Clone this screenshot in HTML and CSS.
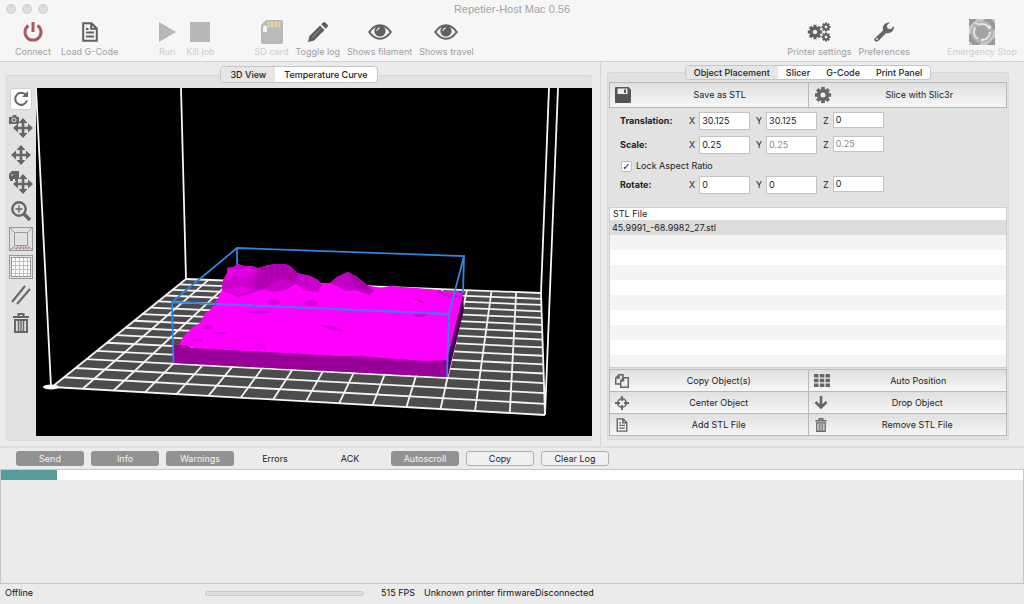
FILE: index.html
```html
<!DOCTYPE html>
<html lang="en">
<head>
  <meta charset="UTF-8">
  <meta name="viewport" content="width=device-width, initial-scale=1.0">
  <title>Repetier-Host Mac 0.56</title>
  <link rel="stylesheet" href="styles.css">
</head>
<body>
  <!-- shared icons -->
  <svg class="defs" width="0" height="0" aria-hidden="true">
    <symbol id="file" viewBox="0 0 16 20">
      <path d="M1.2 1.2h8.3l5.3 5.3v12.3H1.2zM9.2 1.5v5.3h5.3M4 10.5h8M4 14.5h8M4 7h2.500" fill="none" stroke="currentColor" stroke-width="2"/>
    </symbol>
    <symbol id="eye" viewBox="0 0 24 16">
      <path d="M1.200 8C5.500 2 8.500 1.200 12 1.200S18.500 2 22.800 8C18.500 14 15.500 14.800 12 14.800S5.500 14 1.200 8z" fill="#f6f6f6" stroke="currentColor" stroke-width="2"/>
      <circle cx="12" cy="7" r="5.600" fill="currentColor"/>
      <path d="M9 7a3.200 3.200 0 0 1 3-3" fill="none" stroke="#ddd" stroke-width="1.200"/>
    </symbol>
    <symbol id="gear" viewBox="-10 -10 20 20">
      <g fill="currentColor">
        <rect x="-2" y="-9" width="4" height="18"/>
        <rect x="-2" y="-9" width="4" height="18" transform="rotate(45)"/>
        <rect x="-2" y="-9" width="4" height="18" transform="rotate(90)"/>
        <rect x="-2" y="-9" width="4" height="18" transform="rotate(135)"/>
      </g>
      <circle r="4.800" fill="#eee" stroke="currentColor" stroke-width="4"/>
    </symbol>
    <symbol id="trash" viewBox="0 0 16 20">
      <path d="M5.500 3V1h5v2M0 4h16" fill="none" stroke="currentColor" stroke-width="2"/>
      <path d="M2 7h12v12H2z" fill="none" stroke="currentColor" stroke-width="2"/>
      <path d="M5.500 8v10M8 8v10M10.500 8v10" stroke="currentColor" stroke-width="1.500"/>
    </symbol>
    <symbol id="move" viewBox="0 0 20 20">
      <path d="M10 3v14M3 10h14" stroke="currentColor" stroke-width="2.600"/>
      <path d="M10 0l4.500 5h-9zM10 20l4.500-5h-9zM0 10l5-4.500v9zM20 10l-5-4.500v9z" fill="currentColor"/>
    </symbol>
  </svg>

  <header class="titlebar">
    <div class="title">
      <span class="lights"><i></i><i></i><i></i></span>
      <h1>Repetier-Host Mac 0.56</h1>
    </div>
    <div class="toolbar">
      <div class="tools">
        <button class="tool">
          <svg width="20" height="20" viewBox="0 0 20 20"><path d="M5.500 3.500a8 8 0 1 0 9 0M10 0v10" fill="none" stroke="#ab5a61" stroke-width="3"/></svg>
          Connect
        </button>
        <button class="tool"><svg width="16" height="20"><use href="#file"/></svg>Load G-Code</button>
      </div>
      <div class="tools">
        <button class="tool" disabled>
          <svg width="18" height="20" viewBox="0 0 18 20"><path d="M1 0l17 10L1 20z" fill="#b8b8b8"/></svg>
          Run
        </button>
        <button class="tool" disabled>
          <svg width="20" height="20"><rect width="20" height="20" fill="#b8b8b8"/></svg>
          Kill job
        </button>
      </div>
      <div class="tools tight">
        <button class="tool" disabled>
          <svg width="22" height="24" viewBox="0 0 22 24">
            <path d="M5 0h15a2 2 0 0 1 2 2v20a2 2 0 0 1-2 2H2a2 2 0 0 1-2-2V5z" fill="#b9b9b9"/>
            <path d="M7.500 1.500v6M11 1.500v6M14.500 1.500v6M18 1.500v6" stroke="#e3d3a4" stroke-width="2.500"/>
            <path d="M2 7l2-2 2 2v5H2z" fill="#f6f6f6"/>
          </svg>
          SD card
        </button>
        <button class="tool">
          <svg width="20" height="20" viewBox="0 0 20 20"><path d="M0 20l1.500-6L12 3.500 16.500 8 6 18.500zM13.200 2.300l2-1.900q1-.8 2 0l2.400 2.400q.8 1 0 2l-1.900 2z" fill="#5c5c5c"/><path d="M4 15.500l9-9" stroke="#999"/></svg>
          Toggle log
        </button>
        <button class="tool"><svg width="24" height="16"><use href="#eye"/></svg>Shows filament</button>
        <button class="tool"><svg width="24" height="16"><use href="#eye"/></svg>Shows travel</button>
      </div>
      <div class="tools tight right">
        <button class="tool">
          <svg width="24" height="20" viewBox="0 0 24 20">
            <use href="#gear" x="0" y="2" width="16" height="16"/>
            <use href="#gear" x="14" y="0" width="10" height="10"/>
            <use href="#gear" x="14" y="10" width="10" height="10"/>
          </svg>
          Printer settings
        </button>
        <button class="tool">
          <svg width="20" height="20" viewBox="0 0 20 20"><path d="M.8 16.200L9 8.500C8 4 11 0 16 .5L12.800 3.500l.7 3 3.200.7L20 4c.3 5-3.500 8-7.800 7L4.200 19c-2.500 2-5-.8-3.400-2.800z" fill="#666"/><circle cx="3" cy="17" r="1" fill="#eee"/></svg>
          Preferences
        </button>
      </div>
      <button class="tool" disabled>
        <svg width="26" height="26" viewBox="0 0 26 26">
          <rect width="26" height="26" fill="#999"/>
          <path d="M0 8l8-8h8L0 16zM26 10v8l-8 8h-8zM0 22l4 4H0zM22 0h4v4z" fill="#c9c9c9"/>
          <circle cx="13" cy="13" r="11" fill="#b5b5b5"/>
          <circle cx="13" cy="13" r="8" fill="#aaa" stroke="#f0f0f0" stroke-width="1.500" stroke-dasharray="13 3.750"/>
          <path d="M19 7l3 0-1 4zM7 5.500l-1-2 4 1zM12 21l2-2v4z" fill="#f0f0f0"/>
          <circle cx="13" cy="13" r="5.500" fill="#a2a2a2"/>
        </svg>
        Emergency Stop
      </button>
    </div>
  </header>

  <main class="panes">
    <section class="pane view">
      <nav class="tabs">
        <button class="tab active">3D View</button>
        <button class="tab">Temperature Curve</button>
      </nav>
      <div class="group stage">
        <div class="modes">
          <button class="mode on" aria-label="Rotate">
            <svg width="16" height="16" viewBox="0 0 16 16"><path d="M13 4.200A6 6 0 1 0 14 9.500" fill="none" stroke="currentColor" stroke-width="2"/><path d="M15 0v6H9z" fill="currentColor"/></svg>
          </button>
          <button class="mode" aria-label="Move camera">
            <svg width="24" height="24" viewBox="0 0 24 24"><use href="#move" x="4" y="3" width="20" height="20"/><path d="M0 2h3l1-2h3l1 2h2v7H0z" fill="currentColor"/><circle cx="5" cy="5" r="2" fill="none" stroke="#e0e0e0"/></svg>
          </button>
          <button class="mode" aria-label="Move view"><svg width="20" height="20"><use href="#move"/></svg></button>
          <button class="mode" aria-label="Move object">
            <svg width="24" height="24" viewBox="0 0 24 24"><use href="#move" x="4" y="3" width="20" height="20"/><path d="M3 0h7v8H0V3zM1 8h3v2H1zM6 8h3v2H6z" fill="currentColor"/><path d="M2 4h2" stroke="#e0e0e0"/></svg>
          </button>
          <button class="mode" aria-label="Zoom">
            <svg width="20" height="20" viewBox="0 0 20 20"><circle cx="8" cy="8" r="6.700" fill="none" stroke="currentColor" stroke-width="2.400"/><path d="M13 13l6 6" stroke="currentColor" stroke-width="3.500"/><path d="M8 4.500v7M4.500 8h7" stroke="currentColor" stroke-width="1.500"/></svg>
          </button>
          <button class="mode" aria-label="Perspective view">
            <svg width="24" height="24" viewBox="0 0 24 24" fill="none" stroke="#999"><rect x=".5" y=".5" width="23" height="23"/><path d="M5.500 5.500h13v13h-13zM.5.500l5 5M23.500.5l-5 5M.5 23.500l5-5M23.500 23.500l-5-5"/><path d="M7 23l2-4M11 23l.5-4M15 23l-1-4M19 23l-3-4M3 21h18" stroke="#b48c8c"/></svg>
          </button>
          <button class="mode" aria-label="Top view">
            <svg width="24" height="24" viewBox="0 0 24 24" fill="none" stroke="#999"><rect x=".5" y=".5" width="23" height="23"/><rect x="2.500" y="2.500" width="19" height="19" fill="#fff"/><path d="M6.500 3v18M10.500 3v18M14.500 3v18M18.500 3v18M3 6.500h18M3 10.500h18M3 14.500h18M3 18.500h18" stroke="#dbb0ba"/></svg>
          </button>
          <button class="mode" aria-label="Parallel projection">
            <svg width="20" height="20" viewBox="0 0 20 20"><path d="M1 17L14 1M6 19L19 4" stroke="currentColor" stroke-width="2"/></svg>
          </button>
          <button class="mode" aria-label="Delete"><svg width="16" height="20"><use href="#trash"/></svg></button>
        </div>
        <svg class="viewport" viewBox="36 88 556 348" preserveAspectRatio="xMidYMid meet">
          <!-- printer bed, lines are added by bed.js -->
          <polygon points="52,387 545,415 541,293 186,279" fill="#4c4c4c"/>
          <g id="bed" stroke="#f5f5f5" stroke-width="1.800"></g>
          <g stroke="#f5f5f5" stroke-width="1.800" fill="none">
            <path d="M51 387L36 88M186 279L181 88M541 293L549 88M545 415L558 88"/>
          </g>
          <ellipse cx="51" cy="387" rx="8" ry="2.500" fill="#fff"/>
          <path d="M237 248V270M464 256L463 293" stroke="#2f86e0" stroke-width="1.800"/>
          <!-- model -->
          <polygon points="463,293 464,310 448,376 446,360" fill="#4b004f"/>
          <path d="M173 345h6l4-8 10-10 7-4 5-10 5-3 8-12 4-8 1-10 4-7v-5l6-1 5-3 6 2 7 0 7 2 7-2 10-2h10l5 2 7 7 13 3 8 4 4 4 8-1 7-6 11-5 9 5 10 8 13 3 10-2 13 1 14 1 20 2 6 1 14 0 6 3-16 67-20 2-44-5-50 0-110-6z" fill="#f0f"/>
          <path d="M227 268l6-1 5-3 6 2 7 0 7 2 7-2 10-2h10l5 2 7 7 13 3 8 4 4 4-4 8-14-2-8-6-10 6-12 2-12-3-12 5-12 3-16-7 1-10 4-7z" fill="#cc00cc"/>
          <path d="M258 268l7-2 10-2h10l5 2 7 7 1 6-8 5-6-5-12 4-10 7-10-3z" fill="#b300b5"/>
          <path d="M265 268l2 12M271 267v14M277 267l1 12M283 268l2 11M289 270l2 9M296 275l3 7M306 277l2 9" stroke="#8c0090" stroke-width="1" opacity=".6"/>
          <path d="M228 268l12 2 8-3 8 4-10 7-13-2-8 6zM225 290l16-4 12 4-14 5z" fill="#e200e4"/>
          <path d="M330 283l7-6 11-5 9 5 10 8 8 6-6 4-13-5-10 1-9-5z" fill="#c400c6"/>
          <path d="M348 273l9 4 10 8 3 6-14-4z" fill="#a800aa"/>
          <g fill="#c800ca" opacity=".7">
            <ellipse cx="274" cy="302" rx="6" ry="3"/><ellipse cx="311" cy="303" rx="7" ry="3"/>
            <ellipse cx="259" cy="312" rx="11" ry="1.500"/><ellipse cx="207" cy="327" rx="6" ry="2"/>
            <ellipse cx="221" cy="333" rx="6" ry="1.500"/><ellipse cx="197" cy="340" rx="5" ry="1.500"/>
            <ellipse cx="260" cy="345" rx="5" ry="1.500"/><ellipse cx="420" cy="315" rx="7" ry="2"/>
            <path d="M318 325l14 1 12 4-2 2-14-3z"/><path d="M412 297l8 2 4 4-8-2zM436 290l8 3 10 1 7 3-10 1-12-4z"/>
          </g>
          <path d="M173 345l12 0 7 3 111 6 34 2h20l26 2 44 3 20-1 0 17-274-14z" fill="#990099"/>
          <path d="M173.500 363L172 302 237 248 464 256 449 314 447 377M172 302L449 314" fill="none" stroke="#2f86e0" stroke-width="1.800"/>
          <path d="M214 304L449 314" stroke="#5a6cf5" stroke-width="1.800"/>
        </svg>
      </div>
    </section>

    <section class="pane side">
      <nav class="tabs small">
        <button class="tab active">Object Placement</button>
        <button class="tab">Slicer</button>
        <button class="tab">G-Code</button>
        <button class="tab">Print Panel</button>
      </nav>
      <div class="group placement">
        <div class="actions big">
          <button class="action">
            <svg width="16" height="16" viewBox="0 0 16 16"><path d="M1 0h12.500L16 2.500V15a1 1 0 0 1-1 1H1a1 1 0 0 1-1-1V1a1 1 0 0 1 1-1z" fill="#555"/><path d="M2.500 1.500h10V7h-10z" fill="#eee"/><path d="M9 2.500h2V6H9z" fill="#555"/></svg>
            <span>Save as STL</span>
          </button>
          <button class="action"><svg width="18" height="18"><use href="#gear"/></svg><span>Slice with Slic3r</span></button>
        </div>

        <form class="transform">
          <div class="row">
            <b>Translation:</b>
            <label>X <input type="text" value="30.125"></label>
            <label>Y <input type="text" value="30.125"></label>
            <label>Z <input type="text" class="short" value="0"></label>
          </div>
          <div class="row">
            <b>Scale:</b>
            <label>X <input type="text" value="0.25"></label>
            <label>Y <input type="text" value="0.25" disabled></label>
            <label>Z <input type="text" class="short" value="0.25" disabled></label>
          </div>
          <label class="lock"><input type="checkbox" checked> Lock Aspect Ratio</label>
          <div class="row">
            <b>Rotate:</b>
            <label>X <input type="text" value="0"></label>
            <label>Y <input type="text" value="0"></label>
            <label>Z <input type="text" class="short" value="0"></label>
          </div>
        </form>

        <div class="files">
          <table>
            <thead><tr><th>STL File</th></tr></thead>
            <tbody><tr><td>45.9991_-68.9982_27.stl</td></tr></tbody>
          </table>
          <div class="stripes"></div>
        </div>

        <div class="actions">
          <button class="action">
            <svg width="14" height="14" viewBox="0 0 14 14" fill="none" stroke="currentColor" stroke-width="1.500"><path d="M5 10H.7V4L4 .7h4V4M4 .7V4H.7"/><path d="M8.500 3.700h4.800v9.600H5.700V6.700zM8.500 3.700v3H5.700" fill="#eee"/></svg>
            <span>Copy Object(s)</span>
          </button>
          <button class="action">
            <svg width="16" height="13" viewBox="0 0 16 13"><path d="M0 0h4.500v3.500H0zM5.800 0h4.500v3.500H5.800zM11.500 0H16v3.500h-4.500zM0 4.700h4.500v3.500H0zM5.800 4.700h4.500v3.500H5.800zM11.500 4.700H16v3.500h-4.500zM0 9.500h4.500V13H0zM5.800 9.500h4.500V13H5.800zM11.500 9.500H16V13h-4.500z" fill="currentColor"/></svg>
            <span>Auto Position</span>
          </button>
          <button class="action">
            <svg width="14" height="14" viewBox="0 0 14 14"><circle cx="7" cy="7" r="4.300" fill="none" stroke="currentColor" stroke-width="1.600"/><path d="M7 0v5M7 9v5M0 7h5M9 7h5" stroke="currentColor" stroke-width="1.800"/></svg>
            <span>Center Object</span>
          </button>
          <button class="action">
            <svg width="14" height="14" viewBox="0 0 14 14"><path d="M7 0v11M1.500 6L7 11.500 12.500 6" fill="none" stroke="currentColor" stroke-width="2.600"/></svg>
            <span>Drop Object</span>
          </button>
          <button class="action"><svg width="14" height="14"><use href="#file"/></svg><span>Add STL File</span></button>
          <button class="action"><svg width="14" height="14"><use href="#trash"/></svg><span>Remove STL File</span></button>
        </div>
      </div>
    </section>
  </main>

  <section class="log">
    <div class="filters">
      <button class="filter on">Send</button>
      <button class="filter on">Info</button>
      <button class="filter on">Warnings</button>
      <button class="filter">Errors</button>
      <button class="filter">ACK</button>
      <button class="filter on">Autoscroll</button>
      <button class="filter line">Copy</button>
      <button class="filter line">Clear Log</button>
    </div>
    <div class="console"><div class="line-row"><span></span></div></div>
  </section>

  <footer class="status">
    <span class="state">Offline</span>
    <div class="progress"></div>
    <span class="fps">515 FPS</span>
    <span>Unknown printer firmwareDisconnected</span>
  </footer>

  <script src="bed.js"></script>
</body>
</html>
```
FILE: styles.css
```css
* {
  box-sizing: border-box;
}

body {
  margin: 0;
  min-height: 100vh;
  display: flex;
  flex-direction: column;
  background: #ebebeb;
  color: #222;
  font: 9px/12px Inter, "Liberation Sans", sans-serif;
}

button,
input {
  font: inherit;
  color: inherit;
  margin: 0;
}

button {
  border: none;
  background: none;
  padding: 0;
}

.defs {
  position: absolute;
}

/* Title bar and toolbar */
.titlebar {
  height: 62px;
  background: #f6f6f6;
  border-bottom: 1px solid #d2d2d2;
}

.title {
  display: grid;
  grid-template-columns: 1fr auto 1fr;
  align-items: center;
  height: 18px;
  padding: 0 6px;
}

.title h1 {
  margin: 0;
  font: 11px/12px "Liberation Sans", sans-serif;
  color: #a3a3a3;
}

.lights {
  display: flex;
  gap: 6px;
}

.lights i {
  width: 10px;
  height: 10px;
  border-radius: 50%;
  background: #dcdcdc;
  border: 1px solid #d0d0d0;
}

.toolbar {
  display: flex;
  padding: 0 7px 0 15px;
}

.tools {
  display: flex;
  gap: 10px;
  margin-right: 40px;
}

.tools.tight {
  gap: 7px;
}

.tools.right {
  margin-left: auto;
  margin-right: 37px;
}

.tool {
  display: grid;
  grid-template-rows: 28px 12px;
  justify-items: center;
  align-items: center;
  color: #a0a0a0;
}

.tool svg {
  color: #606060;
}

.tool:disabled {
  color: #cfcfcf;
}

/* Panes */
.panes {
  flex: 1;
  display: grid;
  grid-template-columns: minmax(0, 1fr) 424px;
  border-bottom: 2px solid #dedede;
}

.pane {
  display: flex;
  flex-direction: column;
}

.view {
  padding: 4px 8px 5px 6px;
}

.side {
  padding: 3px 15px 6px 6px;
  border-left: 1px solid #d6d6d6;
}

.group {
  flex: 1;
  background: #e2e2e2;
  border: 1px solid #d8d8d8;
  border-radius: 3px;
  margin-top: -8px;
}

.tabs {
  align-self: center;
  display: flex;
  z-index: 1;
  height: 17px;
  border: 1px solid #c4c4c4;
  border-radius: 4px;
  background: #fff;
  overflow: hidden;
}

.tabs.small {
  height: 15px;
}

.tab {
  padding: 0 9px;
  font-weight: 500;
}

.small .tab {
  padding: 0 8px;
}

.tab.active {
  background: #e6e6e6;
}

.stage {
  display: flex;
  padding: 12px 0 4px 2px;
  border-right: none;
}

.modes {
  width: 24px;
  margin-right: 3px;
  display: flex;
  flex-direction: column;
  align-items: center;
  gap: 4px;
  color: #666;
}

.mode {
  width: 24px;
  height: 24px;
  display: grid;
  place-items: center;
}

.mode.on {
  width: 22px;
  height: 22px;
  margin-bottom: 1px;
  background: #fff;
  border: 1px solid #d0d0d0;
  border-radius: 3px;
}

.viewport {
  flex: 1;
  min-width: 0;
  background: #000;
}

/* Object placement */
.placement {
  display: flex;
  flex-direction: column;
  padding: 9px 1px 3px;
}

.actions {
  display: grid;
  grid-template-columns: 1fr 1fr;
  gap: 1px;
  padding: 1px;
  background: #b8b8b8;
}

.action {
  display: flex;
  align-items: center;
  gap: 6px;
  height: 21px;
  padding: 0 5px;
  color: #222;
  background: linear-gradient(#e0e0e0, #f6f6f6);
}

.big .action {
  height: 24px;
}

.action svg {
  color: #666;
}

.action span {
  flex: 1;
}

.transform {
  padding: 4px 11px 7px;
}

.row {
  display: flex;
  align-items: flex-start;
  height: 24px;
}

.row b {
  width: 69px;
  line-height: 18px;
}

.row label {
  display: flex;
  line-height: 18px;
  width: 67px;
  gap: 4px;
}

.row input {
  width: 51px;
  height: 18px;
  padding: 0 2px;
  background: #fff;
  border: 1px solid #c3c3c3;
}

.row input.short {
  height: 16px;
}

.row input:disabled {
  color: #8b8b8b;
}

.lock {
  display: flex;
  align-items: center;
  gap: 4px;
  height: 16px;
  padding: 0 0 4px 1px;
}

.lock input {
  appearance: none;
  width: 11px;
  height: 11px;
  display: grid;
  place-items: center;
  background: #fff;
  border: 1px solid #bdbdbd;
  border-radius: 2px;
}

.lock input:checked::after {
  content: "✓";
  font: 10px/10px "DejaVu Sans", sans-serif;
}

.files {
  flex: 1;
  display: flex;
  flex-direction: column;
  margin-bottom: 1px;
  border: 1px solid #d0d0d0;
  background: #fff;
}

.files table {
  width: 100%;
  border-collapse: collapse;
}

.files th {
  height: 12px;
  padding: 0 3px;
  font-weight: 400;
  text-align: left;
}

.files td {
  height: 15px;
  padding: 0 2px;
  background: #dcdcdc;
}

.stripes {
  flex: 1;
  background: repeating-linear-gradient(#f4f4f4 0 15px, #fff 15px 30px);
}

/* Log */
.filters {
  display: flex;
  gap: 7px;
  padding: 3px 16px;
}

.filter {
  width: 68px;
  height: 15px;
  border-radius: 3px;
}

.filter.on {
  background: #929292;
  color: #f4f4f4;
}

.filter.line {
  border: 1px solid #b0b0b0;
  background: #f0f0f0;
}

.console {
  height: 115px;
  border: 1px solid #c6c6c6;
}

.line-row {
  height: 10px;
  background: #fff;
}

.line-row span {
  display: block;
  width: 56px;
  height: 10px;
  background: #579b9b;
}

/* Status bar */
.status {
  display: flex;
  align-items: center;
  height: 20px;
  padding: 0 5px 2px;
  color: #111;
}

.state {
  width: 200px;
}

.progress {
  width: 159px;
  height: 5px;
  background: #dedede;
  border: 1px solid #c9c9c9;
  border-radius: 3px;
}

.fps {
  margin: 0 9px 0 17px;
}
```
FILE: bed.js
```js
const bed = document.getElementById("bed");
const cells = 15;

// bed corners on screen: front left, front right, back right, back left
const corners = [[52, 387], [545, 415], [541, 293], [186, 279]];

// perspective map from the unit square onto the corners
function makeMap([[x0, y0], [x1, y1], [x2, y2], [x3, y3]]) {
  const sx = x0 - x1 + x2 - x3;
  const sy = y0 - y1 + y2 - y3;
  const dx1 = x1 - x2, dy1 = y1 - y2;
  const dx2 = x3 - x2, dy2 = y3 - y2;
  const den = dx1 * dy2 - dx2 * dy1;
  const g = (sx * dy2 - dx2 * sy) / den;
  const h = (dx1 * sy - sx * dy1) / den;
  return (u, v) => {
    const w = g * u + h * v + 1;
    return [
      ((x1 - x0 + g * x1) * u + (x3 - x0 + h * x3) * v + x0) / w,
      ((y1 - y0 + g * y1) * u + (y3 - y0 + h * y3) * v + y0) / w
    ];
  };
}

function addLine(a, b) {
  const line = document.createElementNS("http://www.w3.org/2000/svg", "line");
  line.setAttribute("x1", a[0]);
  line.setAttribute("y1", a[1]);
  line.setAttribute("x2", b[0]);
  line.setAttribute("y2", b[1]);
  bed.appendChild(line);
}

const map = makeMap(corners);
for (let i = 0; i <= cells; i++) {
  const t = i / cells;
  addLine(map(t, 0), map(t, 1));
  addLine(map(0, t), map(1, t));
}
```
